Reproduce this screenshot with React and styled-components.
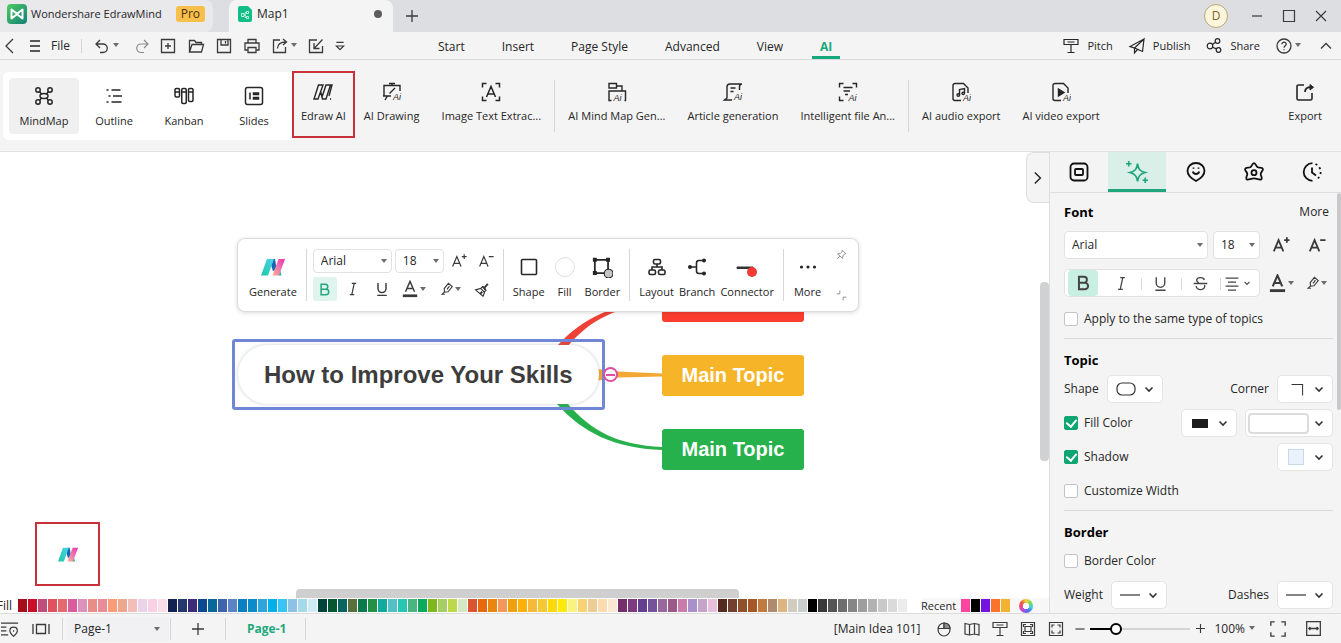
import { useState } from "react";
import styled, { createGlobalStyle, css } from "styled-components";

const palette = [
  "#a80f1d", "#c8102a", "#bf4f7a", "#e0525f", "#e46a70", "#d95c9c", "#dc93bb", "#e88d88", "#ea8c98", "#fb9c78",
  "#eda78f", "#f3bdb8", "#ead3e8", "#f9d0e5", "#fbdfe8", "#14224f", "#23396b", "#3c2c78", "#0b4a8f", "#0a6799",
  "#3f63ad", "#5b84c4", "#0a7fc2", "#0b8bca", "#2ea6dc", "#04b0ea", "#38c4f4", "#8dc1e6", "#a4d9ea", "#cfeaf5",
  "#03443a", "#075632", "#0a6560", "#59703b", "#0a7a4a", "#219243", "#10ab9d", "#54bfc6", "#26c6b2", "#4bb582",
  "#0cab5c", "#7fb81c", "#a5cf66", "#bdd849", "#d3e8c3", "#da5430", "#e8690d", "#e8860f", "#f3985a", "#eda20d",
  "#fbb00c", "#f8b93b", "#f4c934", "#fbd90a", "#fdea0a", "#faf283", "#fbd273", "#ebcd97", "#fcdcae", "#fbe8d2",
  "#75306c", "#7f3a7f", "#643f8f", "#74539a", "#96689c", "#9b5b8a", "#c97bac", "#a990cb", "#c6a3cb", "#e8bfda",
  "#552a20", "#73402f", "#8f502a", "#a5572a", "#bf7a3d", "#b08a6e", "#deb580", "#d0ccc0", "#c8d0c9", "#000000",
  "#393939", "#555555", "#6e6e6e", "#868686", "#9e9e9e", "#b2b2b2", "#c9c9c9", "#dadada", "#ececec", "#ffffff",
];

const recent = ["#fb459e", "#000000", "#7414e0", "#fb7328", "#f4b232"];

const menus = ["Start", "Insert", "Page Style", "Advanced", "View", "AI"];

const views = [
  { icon: "mindmap", label: "MindMap" },
  { icon: "outline", label: "Outline" },
  { icon: "kanban", label: "Kanban" },
  { icon: "slides", label: "Slides" },
];

function AiMark({ x, y }) {
  return (
    <text x={x} y={y} fontSize="9" fontStyle="italic" fill="currentColor" stroke="none" fontFamily="Liberation Sans, sans-serif">
      Ai
    </text>
  );
}

const shapes = {
  back: <path d="M13 3 6 10l7 7" />,
  menu: <path d="M5 5h10M5 10h10M5 15h10" />,
  undo: <path d="M8 4 4 8l4 4M4.5 8H11a4.2 4.2 0 0 1 0 8.5H8" />,
  redo: <path d="m12 4 4 4-4 4M15.5 8H9a4.2 4.2 0 0 0 0 8.5h3" />,
  add: <path d="M3.500 3.500h13v13h-13zM10 7v6M7 10h6" />,
  open: <path d="M3.500 16V4.500h5l1.500 2h5.500v2M3.500 16l2.500-7.500h11.500L15.500 16z" />,
  save: <path d="M3.500 3.500h13v13h-13zM7 3.500v5.500h7V3.500M11.500 5v2.500" />,
  print: <path d="M6 7V3.500h8V7M6 14H3V7h14v7h-3M6 11.500h8v5H6z" />,
  share: <path d="M10 4H3.500v12.500h12V11M7.500 12.500c0-4 2.500-6.500 8.500-6.500M13 3l3.500 3L13 9" />,
  import: <path d="M11 4H3.500v12.500h13V10M16.500 3.500 8.500 12M8 7v5.500h5.500" />,
  more: <path d="M6 6h8M6 10h8l-4 4z" />,
  pitch: <path d="M3 3.500h14v5H3zM6.500 6h7M10 8.500v8M6.500 16.500h7" />,
  publish: <path d="M17 3 3 10.500l4.500 1.500L17 3l-1.500 12.500-8-3.500v5l3-3.500" />,
  nodes: (
    <>
      <circle cx="6" cy="10" r="2.8" />
      <circle cx="13.5" cy="5" r="2.3" />
      <circle cx="14.5" cy="14" r="2.3" />
      <path d="m8.500 8.600 3-2.300M8.600 11.200l3.800 1.700" />
    </>
  ),
  help: (
    <>
      <circle cx="10" cy="10" r="7" />
      <path d="M7.800 8.300c0-3 4.600-2.800 4.400 0C12.100 9.800 10 9.800 10 11.700M10 13.200v1" />
    </>
  ),
  up: <path d="m5 12.500 5-5 5 5" />,
  right: <path d="m6 3 7 7-7 7" />,
  down: <path d="m6.500 8.500 3.500 3.500 3.500-3.500" />,
  minus: <path d="M5 10h10" />,
  plus: <path d="M4 10h12M10 4v12" />,
  square: <path d="M4.500 4.500h11v11h-11z" />,
  close: <path d="m5 5 10 10M15 5 5 15" />,
  mindmap: (
    <>
      <ellipse cx="10" cy="10" rx="4" ry="2.5" />
      <circle cx="4" cy="4" r="2.2" />
      <circle cx="16" cy="4" r="2.2" />
      <circle cx="4" cy="16" r="2.2" />
      <circle cx="16" cy="16" r="2.2" />
      <path d="m5.500 5.500 2 2.400M14.500 5.500l-2 2.400M5.500 14.500l2-2.400M14.500 14.500l-2-2.400" />
    </>
  ),
  outline: <path d="M2.500 4h2M7.500 4h9M4.500 10h2M9 10h9M2.500 16h2M7.500 16h10" />,
  kanban: (
    <>
      <rect x="1" y="2.5" width="4.5" height="8.5" rx="1.2" />
      <rect x="7.75" y="2.5" width="4.5" height="15" rx="1.2" />
      <rect x="14.5" y="2.5" width="4.5" height="13" rx="1.2" />
      <path d="M1 6h4.500M8 6h4M14.500 6H19" />
    </>
  ),
  slides: (
    <>
      <rect x="1.5" y="1.5" width="17" height="17" rx="2" />
      <path d="M6 6.500v7M9.500 7h5v1.500h-5zM9.500 11.500h5V13h-5z" />
    </>
  ),
  edraw: <path d="M5.500 3H10L5 17H1zM7.500 9 9.500 17H13L17.500 3H13L9 15M17.500 3H19l-3 11M17 17h1.200" />,
  drawing: (
    <>
      <path d="M7 1.500h6M10 1.500V3.500M18 9V3.500H2V14h7M5.500 14 3 18M1 14h8M7.500 11.500 13 6" />
      <AiMark x="11" y="18" />
    </>
  ),
  scanText: <path d="M1.500 5.500v-4h4M14.500 1.500h4v4M1.500 14.500v4h4M14.500 18.500h4v-4M5.500 15l4.500-10.500L14.500 15M7 12h6" />,
  aiMap: (
    <>
      <path d="M2 1.500h7.500V6H2zM9.500 4H15v4.500M4.500 18.500H2V9h16.500v9.500h-1" />
      <AiMark x="6.5" y="18.5" />
    </>
  ),
  article: (
    <>
      <path d="M9 18H1.500L4 16V5c0-2 1-3 3-3h12c-1.500 0-2.500 1-2.500 3v3M7.500 6h5M7.500 9.500h3" />
      <AiMark x="11" y="18" />
    </>
  ),
  fileAi: (
    <>
      <path d="M1.500 5.500v-4h4M14.500 1.500h4v4M1.500 14.500v4h4M5.500 5.500h9M5.500 9h6.500M7 12.500h3" />
      <AiMark x="10.5" y="19" />
    </>
  ),
  audio: (
    <>
      <path d="M10 18.500H4a2 2 0 0 1-2-2v-13a2 2 0 0 1 2-2h8.500L17 6v5M8.500 13V7.500l5-1V11" />
      <circle cx="7.3" cy="13" r="1.3" />
      <circle cx="12.2" cy="11.3" r="1.2" />
      <AiMark x="12" y="19" />
    </>
  ),
  video: (
    <>
      <path d="M10 18.500H4a2 2 0 0 1-2-2v-13a2 2 0 0 1 2-2h8.500L17 6v5" />
      <path d="m7.500 7 5.500 3.500L7.500 14z" fill="currentColor" />
      <AiMark x="12" y="19" />
    </>
  ),
  export: (
    <>
      <path d="M9 3H3.500A1.500 1.500 0 0 0 2 4.500v12A1.500 1.500 0 0 0 3.500 18h12a1.500 1.500 0 0 0 1.500-1.500V11" />
      <path d="M10 10c0-3 1.500-4.800 6-4.800" strokeWidth="1.8" />
      <path d="m15 2.500 3.500 2.800L15 8z" fill="currentColor" strokeWidth="1" />
    </>
  ),
  bold: <path d="M5.500 3h5.500a3.300 3.300 0 0 1 0 6.700H5.500zM5.500 9.700H12a3.600 3.600 0 0 1 0 7.300H5.500z" />,
  italic: <path d="M8.500 3H14M6 17h5.500M11.500 3 8.500 17" />,
  underline: <path d="M5 2.500v7a5 5 0 0 0 10 0v-7M4 18h12" />,
  strike: <path d="M14.500 6c-.5-4-9-4-9 .3 0 1.500 1 2.200 2.500 2.700M2 10h16M5 13c.3 5.500 10 5.500 10 .3 0-.6-.1-1-.4-1.500" />,
  align: <path d="M2 4h16M5 9h10M2 14h16M5 19h10" />,
  fontColor: (
    <>
      <path d="M5 13 10 1.500 15 13M6.500 9.500h7" />
      <path d="M2 17.500h16" strokeWidth="3" />
    </>
  ),
  bigger: <path d="M2 17 7.300 4.500 12.600 17M4 13h6.600M13.500 4.500h6M16.500 1.500v6" />,
  smaller: <path d="M2 17 7.300 4.500 12.600 17M4 13h6.600M13.500 4.500h6" />,
  marker: <path d="M6 9.500 12 2l5.500 4.500-6 7.500-5 .5zM6.500 14 3 17.500h4M13.500 6 10 10.500" />,
  painter: (
    <>
      <path d="m2 10.500 7-2 5 5.500-2 5zM9 8.500l2.500-2.500 4.500 5-2.500 2.500z" />
      <path d="m14 7.500 4.500-5M11.500 6l4 4.500M8 16l3-3" strokeWidth="2.5" />
    </>
  ),
  box: <rect x="2.5" y="2.5" width="15" height="15" rx="1" />,
  border: (
    <>
      <path d="M3.500 3.500h12v12h-12z" />
      <path d="M2.500 2.500h2v2h-2zM14.500 2.500h2v2h-2zM2.500 14.500h2v2h-2z" fill="currentColor" />
      <circle cx="16" cy="16" r="4" fill="#c4c4c4" strokeWidth="1" />
    </>
  ),
  layout: (
    <>
      <rect x="6.5" y="2.5" width="7" height="4.5" rx="1.5" />
      <rect x="2" y="13" width="6.5" height="4.5" rx="1.5" />
      <rect x="11.5" y="13" width="6.5" height="4.5" rx="1.5" />
      <path d="M10 7v3M5 13v-3h10v3" />
    </>
  ),
  branch: (
    <>
      <path d="M3 10h6M16.500 3.500H12A2.500 2.500 0 0 0 9.500 6v8a2.500 2.500 0 0 0 2.500 2.500h4.500" />
      <circle cx="3" cy="10" r="1.2" fill="currentColor" />
      <circle cx="17" cy="3.5" r="1.2" fill="currentColor" />
      <circle cx="17" cy="16.5" r="1.2" fill="currentColor" />
    </>
  ),
  dots: (
    <g fill="currentColor" stroke="none">
      <circle cx="3.5" cy="10" r="1.6" />
      <circle cx="10" cy="10" r="1.6" />
      <circle cx="16.5" cy="10" r="1.6" />
    </g>
  ),
  pin: <path d="m11.500 2 6.500 6.500-2.500.5-3 3.500-.5 4.500L3 9l4.500-.5L11 5zM7 13l-4.500 4.500" />,
  collapse: <path d="M7 1v6H1M13 19v-6h6" />,
  tabStyle: (
    <>
      <rect x="1.5" y="1.5" width="17" height="17" rx="3.5" />
      <rect x="6" y="7" width="8" height="6" rx="1" />
    </>
  ),
  tabAi: <path d="M10.500 2.500c.8 5 2.200 6.700 7 8-4.800 1.300-6.200 3-7 8-.8-5-2.200-6.700-7-8 4.800-1.300 6.200-3 7-8zM2.500 0v5M0 2.500h5M17.500 15v5M15 17.500h5" />,
  tabIcon: (
    <>
      <path d="M10 19C4.500 16 1.500 12.500 1.500 8.700a8.500 7.700 0 0 1 17 0c0 3.800-3 7.300-8.500 10.300z" />
      <path d="M6.800 9.500c.8 3.300 5.600 3.300 6.400 0M7.500 5.500v1.200M12.500 5.500v1.200" />
    </>
  ),
  tabClip: (
    <>
      <path d="M10 1.200c1.800 0 2.200 3.200 3.700 4.100 1.400.8 4.700-.1 5.200 1.600.5 1.700-2.200 3.300-2.200 5 0 1.800 1.900 4.100.6 5.400-1.300 1.200-4.100-.9-7.300-.9s-6 2.100-7.300.9c-1.300-1.300.6-3.600.6-5.400 0-1.700-2.700-3.300-2.200-5 .5-1.700 3.800-.8 5.200-1.600 1.500-.9 1.900-4.100 3.700-4.100z" />
      <circle cx="10" cy="10.7" r="2.5" />
    </>
  ),
  tabHistory: (
    <>
      <path d="M10.500 1.200a8.800 8.800 0 1 0 0 17.600M10 5.500v5l4 3" />
      <path d="M13.500 2a8.800 8.800 0 0 1 0 16" strokeDasharray="2 3" />
    </>
  ),
  listPin: <path d="M0 3.500h19M0 8h6M0 12h6M0 16.500h8M14 18c-6.500-5-4.500-10 0-10s6.500 5 0 10zM14 11.500v1.500" />,
  panels: <path d="M2 5v10M18 5v10M5.500 5.500h9v9h-9z" />,
  mouse: (
    <>
      <ellipse cx="10" cy="10.5" rx="6" ry="6.5" />
      <path d="M4 9.500h12M10 4v5.500" />
      <path d="M10 4c4 0 6 2.500 6 5.500h-6z" fill="#8b8b8b" />
    </>
  ),
  map: <path d="m3 4.500 4.500 1 5-1 4.500 1v10.500l-4.500-1-5 1-4.500-1zM7.500 5.500V16M12.500 4.500V15" />,
  fit: <path d="M3.500 3.500h13v13h-13zM7 7.500h6v5H7zM5.500 8V5.500H8M12 5.500h2.500V8M5.500 12v2.500H8M12 14.500h2.500V12" />,
  fill: <path d="M3.500 3.500h13v13h-13zM6 8.500V6h2.500M11.500 6H14v2.500M6 11.500V14h2.500M11.500 14H14v-2.500" />,
  full: <path d="M3.500 7V3.500H7M13 3.500h3.500V7M3.500 13v3.500H7M13 16.500h3.500V13" />,
  fitWidth: <path d="M3.500 3.500h13v13h-13zM5.500 10h9M7 8.500 5.500 10 7 11.500M13 8.500l1.500 1.500-1.500 1.500" />,
  rounded: <rect x="1" y="4" width="18" height="12" rx="5" />,
  corner: <path d="M3 4h13v13" />,
  line: <path d="M-2 10h24" />,
};

function Icon({ name, size = 20, weight = 1 }) {
  return (
    <Svg width={size} height={size} viewBox="0 0 20 20" strokeWidth={weight} aria-hidden="true">
      {shapes[name]}
    </Svg>
  );
}

function Caret() {
  return (
    <Svg width="8" height="5" viewBox="0 0 8 5" aria-hidden="true">
      <path d="M1 0h6L4 4z" fill="#6b6b6b" stroke="none" />
    </Svg>
  );
}

function Logo({ width }) {
  return (
    <Svg width={width} viewBox="0 0 24 18" stroke="none" aria-hidden="true">
      <defs>
        <linearGradient id="teal" x1="1" y1="0" x2="0" y2="1">
          <stop offset="0" stopColor="#4bd3ee" />
          <stop offset="1" stopColor="#1cc9a4" />
        </linearGradient>
        <linearGradient id="pink" x1="1" y1="0" x2="0" y2="1">
          <stop offset="0" stopColor="#f02fa6" />
          <stop offset="0.5" stopColor="#ee74b4" />
          <stop offset="1" stopColor="#fbb08a" />
        </linearGradient>
      </defs>
      <path d="M11.500 1h2.500l1.500 9-3.500 3.500-2-7z" fill="#1766b0" />
      <path d="m17 17.500 2-6 1.500 6z" fill="#23b6a0" />
      <path d="M6 1h7L7 17.500H0z" fill="url(#teal)" />
      <path d="M17.500 1H24l-6 16.500h-6.500z" fill="url(#pink)" />
    </Svg>
  );
}

function Dropdown({ label, icon, width, iconSize = 20, children }) {
  return (
    <DropButton type="button" aria-label={label} $width={width}>
      {children || <Icon name={icon} size={iconSize} weight={1.2} />}
      <Icon name="down" weight={1.6} />
    </DropButton>
  );
}

function Select({ label, options, width, tall }) {
  return (
    <SelectBox $width={width}>
      <NativeSelect aria-label={label} $tall={tall}>
        {options.map((option) => (
          <option key={option}>{option}</option>
        ))}
      </NativeSelect>
      <Caret />
    </SelectBox>
  );
}

function Check({ label, checked }) {
  return (
    <CheckLabel>
      <CheckInput type="checkbox" defaultChecked={checked} />
      {label}
    </CheckLabel>
  );
}

function Header() {
  return (
    <>
      <TitleBar>
        <AppTab>
          <AppLogo width="20" height="20" viewBox="0 0 20 20" aria-hidden="true">
            <defs>
              <linearGradient id="app" x1="0" y1="0" x2="1" y2="1">
                <stop offset="0" stopColor="#4ecb62" />
                <stop offset="1" stopColor="#127f78" />
              </linearGradient>
            </defs>
            <rect width="20" height="20" rx="4" fill="url(#app)" />
            <path d="M4.500 14.500V5.500L10 9.800l5.500-4.300v9L10 10.200z" fill="none" stroke="#fff" strokeWidth="2" strokeLinejoin="round" />
          </AppLogo>
          Wondershare EdrawMind
          <Pro>Pro</Pro>
        </AppTab>
        <DocTab>
          <AppLogo width="14" height="16" viewBox="0 0 14 16" aria-hidden="true">
            <path d="M2 0h8l4 4v10a2 2 0 0 1-2 2H2a2 2 0 0 1-2-2V2a2 2 0 0 1 2-2z" fill="#12bd88" />
            <path d="M3.500 7.500h2.500v3H3.500zM8.500 5.500h2v2h-2zM8.500 10.500h2v2h-2zM6 9h1.200M8.500 6.500H7.200v5h1.300" fill="none" stroke="#e6fff5" strokeWidth="0.8" />
          </AppLogo>
          Map1
          <Dot />
        </DocTab>
        <IconButton type="button" aria-label="New tab" $width={38}>
          <Icon name="plus" weight={1.3} />
        </IconButton>
        <Spacer />
        <Avatar>D</Avatar>
        <IconButton type="button" aria-label="Minimize" $width={32}><Icon name="minus" weight={1.2} /></IconButton>
        <IconButton type="button" aria-label="Maximize" $width={32}><Icon name="square" weight={1.2} /></IconButton>
        <IconButton type="button" aria-label="Close" $width={32}><Icon name="close" weight={1.2} /></IconButton>
      </TitleBar>
      <MenuBar>
        <IconButton type="button" aria-label="Back" $width={20}><Icon name="back" weight={1.3} /></IconButton>
        <FileButton type="button"><Icon name="menu" weight={1.3} />File</FileButton>
        <Rule $height={14} />
        <IconButton type="button" aria-label="Undo" $width={48}><Icon name="undo" weight={1.3} /><Caret /></IconButton>
        <IconButton type="button" aria-label="Redo" $width={24} $dim><Icon name="redo" weight={1.2} /></IconButton>
        <IconButton type="button" aria-label="New" $width={28}><Icon name="add" weight={1.3} /></IconButton>
        <IconButton type="button" aria-label="Open" $width={28}><Icon name="open" weight={1.3} /></IconButton>
        <IconButton type="button" aria-label="Save" $width={28}><Icon name="save" weight={1.3} /></IconButton>
        <IconButton type="button" aria-label="Print" $width={28}><Icon name="print" weight={1.3} /></IconButton>
        <IconButton type="button" aria-label="Share file" $width={36}><Icon name="share" weight={1.3} /><Caret /></IconButton>
        <IconButton type="button" aria-label="Import" $width={28}><Icon name="import" weight={1.3} /></IconButton>
        <IconButton type="button" aria-label="More commands" $width={20}><Icon name="more" size={18} weight={1.3} /></IconButton>
        <Menus>
          {menus.map((menu) => (
            <MenuLink key={menu} href="#" $active={menu === "AI"}>{menu}</MenuLink>
          ))}
        </Menus>
        <Actions>
          <TextButton type="button"><Icon name="pitch" weight={1.2} />Pitch</TextButton>
          <TextButton type="button"><Icon name="publish" weight={1.2} />Publish</TextButton>
          <TextButton type="button"><Icon name="nodes" weight={1.2} />Share</TextButton>
          <IconButton type="button" aria-label="Help" $width={28}><Icon name="help" weight={1.3} /><Caret /></IconButton>
          <IconButton type="button" aria-label="Collapse ribbon" $width={20}><Icon name="up" weight={1.3} /></IconButton>
        </Actions>
      </MenuBar>
      <Ribbon>
        <ViewCard>
          {views.map((view, i) => (
            <ViewButton key={view.label} type="button" $active={i === 0}>
              <Icon name={view.icon} weight={1.5} />
              {view.label}
            </ViewButton>
          ))}
        </ViewCard>
        <RibbonButton type="button" $marked><Icon name="edraw" weight={1.4} />Edraw AI</RibbonButton>
        <RibbonButton type="button"><Icon name="drawing" weight={1.4} />AI Drawing</RibbonButton>
        <RibbonButton type="button" $wide><Icon name="scanText" weight={1.5} />Image Text Extrac...</RibbonButton>
        <Rule $height={52} />
        <RibbonButton type="button" $inset><Icon name="aiMap" weight={1.4} />AI Mind Map Gen...</RibbonButton>
        <RibbonButton type="button"><Icon name="article" weight={1.4} />Article generation</RibbonButton>
        <RibbonButton type="button" $inset><Icon name="fileAi" weight={1.4} />Intelligent file An...</RibbonButton>
        <Rule $height={52} />
        <RibbonButton type="button" $inset><Icon name="audio" weight={1.4} />AI audio export</RibbonButton>
        <RibbonButton type="button"><Icon name="video" weight={1.4} />AI video export</RibbonButton>
        <Spacer />
        <RibbonButton type="button"><Icon name="export" weight={1.6} />Export</RibbonButton>
      </Ribbon>
    </>
  );
}

function FloatingToolbar() {
  return (
    <Floating>
      <Tool type="button"><Logo width={24} />Generate</Tool>
      <Rule $height={52} />
      <FontTools>
        <ToolRow>
          <Select label="Font family" options={["Arial"]} width={79} />
          <Select label="Font size" options={["18"]} width={49} />
          <IconButton type="button" aria-label="Larger text" $width={24}><Icon name="bigger" size={16} weight={1.5} /></IconButton>
          <IconButton type="button" aria-label="Smaller text" $width={24}><Icon name="smaller" size={16} weight={1.5} /></IconButton>
        </ToolRow>
        <ToolRow $tight>
          <Toggle type="button" aria-label="Bold" $active><Icon name="bold" size={15} weight={2} /></Toggle>
          <IconButton type="button" aria-label="Italic" $width={32}><Icon name="italic" size={16} weight={1.5} /></IconButton>
          <IconButton type="button" aria-label="Underline" $width={26}><Icon name="underline" size={16} weight={1.8} /></IconButton>
          <IconButton type="button" aria-label="Font color" $width={38}><Icon name="fontColor" size={18} weight={1.6} /><Caret /></IconButton>
          <IconButton type="button" aria-label="Highlight" $width={36}><Icon name="marker" size={14} weight={1.6} /><Caret /></IconButton>
          <IconButton type="button" aria-label="Format painter" $width={26}><Icon name="painter" size={15} weight={1.5} /></IconButton>
        </ToolRow>
      </FontTools>
      <Rule $height={52} />
      <ToolGroup>
        <Tool type="button"><Icon name="box" weight={1.6} />Shape</Tool>
        <Tool type="button"><FillDot />Fill</Tool>
        <Tool type="button"><Icon name="border" size={22} weight={1.6} />Border</Tool>
      </ToolGroup>
      <Rule $height={52} />
      <ToolGroup $tight>
        <Tool type="button"><Icon name="layout" weight={1.6} />Layout</Tool>
        <Tool type="button"><Icon name="branch" weight={1.6} />Branch</Tool>
        <Tool type="button">
          <Svg width="22" height="20" viewBox="0 0 22 20" aria-hidden="true">
            <path d="M1 10h16v1.500H1z" fill="#333" stroke="#333" />
            <circle cx="16" cy="15" r="5" fill="#f03a32" stroke="none" />
          </Svg>
          Connector
        </Tool>
      </ToolGroup>
      <Rule $height={52} />
      <Tool type="button"><Icon name="dots" />More</Tool>
      <Corner>
        <CornerButton type="button" aria-label="Pin toolbar"><Icon name="pin" size={11} weight={1.6} /></CornerButton>
        <CornerButton type="button" aria-label="Shrink toolbar"><Icon name="collapse" size={11} weight={1.6} /></CornerButton>
      </Corner>
    </Floating>
  );
}

function Canvas() {
  return (
    <Board>
      <Links width="430" height="170" viewBox="233 281 430 170" aria-hidden="true">
        <path d="M557 346c26-28 56-43 105-46v3c-46 3-72 17-94 43z" fill="#ef4136" />
        <path d="M598 369l20 2.500 44 2v3l-44 1-20 3z" fill="#f3a833" />
        <path d="M557 404c26 29 57 44 105 46v-3c-44-2-71-16-94-43z" fill="#27b04b" />
      </Links>
      <Topic $top={129} $color="#fb3d2f">Main Topic</Topic>
      <Topic $top={203} $color="#f6b428">Main Topic</Topic>
      <Topic $top={277} $color="#26b14c">Main Topic</Topic>
      <Selection>
        <MainIdea>How to Improve Your Skills</MainIdea>
      </Selection>
      <Fold type="button" aria-label="Collapse branch" />
      <FloatingToolbar />
      <Assistant type="button" aria-label="Edraw AI assistant"><Logo width={20} /></Assistant>
      <PanelToggle type="button" aria-label="Hide panel"><Icon name="right" size={16} weight={1.8} /></PanelToggle>
      <VerticalBar />
      <HorizontalBar />
    </Board>
  );
}

function Palette() {
  return (
    <PaletteBar>
      <FillLabel>Fill</FillLabel>
      {palette.map((color) => (
        <Swatch key={color} type="button" aria-label={color} $color={color} />
      ))}
      <RecentLabel>Recent</RecentLabel>
      {recent.map((color) => (
        <Swatch key={color} type="button" aria-label={color} $color={color} />
      ))}
      <Wheel type="button" aria-label="More colors" />
    </PaletteBar>
  );
}

function Sidebar() {
  return (
    <Panel>
      <PanelTabs>
        {["tabStyle", "tabAi", "tabIcon", "tabClip", "tabHistory"].map((name) => (
          <PanelTab key={name} type="button" aria-label={name} $active={name === "tabAi"}>
            <Icon name={name} size={name === "tabAi" ? 22 : 20} weight={name === "tabAi" ? 1.5 : 1.8} />
          </PanelTab>
        ))}
      </PanelTabs>
      <PanelBody>
        <Section $gap={4}>
          <Heading>Font<MoreLink href="#">More</MoreLink></Heading>
          <Row $gap={5}>
            <Select label="Topic font" options={["Arial"]} width={144} tall />
            <Select label="Topic font size" options={["18"]} width={47} tall />
            <PanelIcons>
              <IconButton type="button" aria-label="Larger topic text" $width={32}><Icon name="bigger" size={18} weight={2} /></IconButton>
              <IconButton type="button" aria-label="Smaller topic text" $width={32}><Icon name="smaller" size={18} weight={2} /></IconButton>
            </PanelIcons>
          </Row>
          <Row $gap={5}>
            <Segments>
              <Segment type="button" aria-label="Bold topic" $active><Icon name="bold" size={18} weight={2.2} /></Segment>
              <Segment type="button" aria-label="Italic topic"><Icon name="italic" size={17} weight={1.5} /></Segment>
              <Segment type="button" aria-label="Underline topic"><Icon name="underline" size={17} weight={1.6} /></Segment>
              <Segment type="button" aria-label="Strikethrough"><Icon name="strike" size={17} weight={1.6} /></Segment>
              <Segment type="button" aria-label="Align"><Icon name="align" size={16} weight={1.6} /><Icon name="down" size={14} weight={1.6} /></Segment>
            </Segments>
            <PanelIcons>
              <IconButton type="button" aria-label="Topic font color" $width={32}><Icon name="fontColor" size={19} weight={2.2} /><Caret /></IconButton>
              <IconButton type="button" aria-label="Topic highlight" $width={32}><Icon name="marker" size={14} weight={1.6} /><Caret /></IconButton>
            </PanelIcons>
          </Row>
          <Row $short><Check label="Apply to the same type of topics" /></Row>
        </Section>
        <Section>
          <Heading>Topic</Heading>
          <Row>
            Shape
            <Dropdown label="Shape" icon="rounded" width={56} />
            <Spacer />
            Corner
            <Dropdown label="Corner" icon="corner" width={56} iconSize={17} />
          </Row>
          <Row>
            <Check label="Fill Color" checked />
            <Spacer />
            <Dropdown label="Fill style" width={56}><Chip $color="#1c1c1e" /></Dropdown>
            <Dropdown label="Fill color" width={88}><WideChip /></Dropdown>
          </Row>
          <Row>
            <Check label="Shadow" checked />
            <Spacer />
            <Dropdown label="Shadow color" width={56}><Chip $color="#eaf3fd" $square /></Dropdown>
          </Row>
          <Row><Check label="Customize Width" /></Row>
        </Section>
        <Section>
          <Heading>Border</Heading>
          <Row><Check label="Border Color" /></Row>
          <Row>
            Weight
            <Dropdown label="Weight" icon="line" width={56} />
            <Spacer />
            Dashes
            <Dropdown label="Dashes" icon="line" width={56} />
          </Row>
        </Section>
        <PanelScroll />
      </PanelBody>
    </Panel>
  );
}

function StatusBar() {
  const [zoom, setZoom] = useState(22);

  return (
    <Status>
      <IconButton type="button" aria-label="Outline pane" $width={20}><Icon name="listPin" size={18} weight={1.3} /></IconButton>
      <IconButton type="button" aria-label="Page layout" $width={42}><Icon name="panels" weight={1.3} /></IconButton>
      <Rule $height={22} />
      <PageBox><Select label="Page" options={["Page-1"]} width={102} /></PageBox>
      <Rule $height={22} />
      <IconButton type="button" aria-label="Add page" $width={54}><Icon name="plus" weight={1.3} /></IconButton>
      <Rule $height={22} />
      <PageLink href="#">Page-1</PageLink>
      <Rule $height={22} />
      <Spacer />
      <span>[Main Idea 101]</span>
      <StatusIcons>
        {["mouse", "map", "pitch", "fit", "fill"].map((name) => (
          <IconButton key={name} type="button" aria-label={name} $width={28}><Icon name={name} weight={1.2} /></IconButton>
        ))}
      </StatusIcons>
      <IconButton type="button" aria-label="Zoom out" $width={20}><Icon name="minus" size={18} weight={1.3} /></IconButton>
      <Slider
        type="range"
        aria-label="Zoom"
        value={zoom}
        onChange={(e) => setZoom(Number(e.target.value))}
        style={{ "--fill": `${zoom}%` }}
      />
      <IconButton type="button" aria-label="Zoom in" $width={20}><Icon name="plus" size={15} weight={1.5} /></IconButton>
      <ZoomButton type="button">100%<Caret /></ZoomButton>
      <IconButton type="button" aria-label="Full screen" $width={36}><Icon name="full" size={22} weight={1.2} /></IconButton>
      <IconButton type="button" aria-label="Fit width" $width={34}><Icon name="fitWidth" size={21} weight={1.2} /></IconButton>
    </Status>
  );
}

export default function App() {
  return (
    <Shell>
      <GlobalStyle />
      <Header />
      <Main>
        <Workspace>
          <Canvas />
          <Palette />
        </Workspace>
        <Sidebar />
      </Main>
      <StatusBar />
    </Shell>
  );
}

const GlobalStyle = createGlobalStyle`
  * {
    box-sizing: border-box;
  }

  body {
    margin: 0;
    color: #262626;
    font: 12px/16px "Open Sans", "Noto Sans", sans-serif;
  }

  button, select, input {
    margin: 0;
    padding: 0;
    border: 0;
    background: none;
    color: inherit;
    font: inherit;
  }

  a {
    color: inherit;
    text-decoration: none;
  }
`;

const Shell = styled.div`
  display: flex;
  flex-direction: column;
  height: 100vh;
  overflow: hidden;
  background: #f4f4f4;
  white-space: nowrap;
`;

const Svg = styled.svg`
  flex: none;
  fill: none;
  stroke: ${(p) => p.stroke || "currentColor"};
`;

const AppLogo = styled.svg`
  flex: none;
`;

const Spacer = styled.div`
  flex: 1;
`;

const Rule = styled.div`
  flex: none;
  width: 1px;
  height: ${(p) => p.$height}px;
  background: #d6d6d6;
`;

const IconButton = styled.button`
  display: flex;
  flex: none;
  align-items: center;
  justify-content: center;
  width: ${(p) => p.$width}px;
  color: ${(p) => (p.$dim ? "#8a8a8a" : "#3a3a3a")};
`;

const TitleBar = styled.header`
  display: flex;
  flex: none;
  align-items: center;
  height: 32px;
  padding-right: 4px;
  background: #dddee1;
`;

const AppTab = styled.div`
  display: flex;
  align-items: center;
  gap: 4px;
  height: 100%;
  margin-right: 16px;
  padding: 0 8px 4px 7px;
  border-radius: 0 8px 8px 0;
  background: #e9e9ec;
  font-size: 11px;
`;

const Pro = styled.span`
  margin-left: 10px;
  padding: 0 5px;
  border-radius: 3px;
  background: #f8bf4a;
  color: #4a3210;
  font-size: 12px;
`;

const DocTab = styled.div`
  display: flex;
  align-items: center;
  gap: 5px;
  width: 164px;
  height: 100%;
  padding: 0 11px 4px 9px;
  border-radius: 8px 8px 0 0;
  background: #f4f4f4;
`;

const Dot = styled.span`
  width: 8px;
  height: 8px;
  margin-left: auto;
  border-radius: 50%;
  background: #5c5c5c;
`;

const Avatar = styled.span`
  width: 24px;
  margin-right: 13px;
  border: 1px solid #b3a77c;
  border-radius: 50%;
  background: #fdf6dc;
  color: #7d6527;
  line-height: 22px;
  text-align: center;
`;

const MenuBar = styled.nav`
  display: flex;
  flex: none;
  align-items: center;
  height: 28px;
  border-bottom: 1px solid #dadbdc;
`;

const FileButton = styled.button`
  display: flex;
  align-items: center;
  gap: 6px;
  margin-right: 11px;
  padding-left: 5px;
`;

const Menus = styled.div`
  display: flex;
  gap: 37px;
  height: 100%;
  margin-left: 88px;
`;

const MenuLink = styled.a`
  position: relative;
  line-height: 29px;

  ${(p) =>
    p.$active &&
    css`
      color: #14a87c;
      font-weight: 700;

      &::after {
        position: absolute;
        right: -8px;
        bottom: 0;
        left: -8px;
        height: 3px;
        background: #14a87c;
        content: "";
      }
    `}
`;

const Actions = styled.div`
  display: flex;
  align-items: center;
  gap: 14px;
  margin-left: auto;
  padding-right: 5px;
  font-size: 11px;
`;

const TextButton = styled.button`
  display: flex;
  align-items: center;
  gap: 6px;
`;

const Ribbon = styled.div`
  display: flex;
  flex: none;
  align-items: center;
  height: 92px;
  padding: 0 10px 0 3px;
  border-bottom: 1px solid #e2e2e2;
  font-size: 11px;
`;

const ViewCard = styled.div`
  display: flex;
  padding: 6px 3px 6px 6px;
  border-radius: 6px 0 0 6px;
  background: #fff;
`;

const ViewButton = styled.button`
  display: flex;
  flex-direction: column;
  align-items: center;
  gap: 7px;
  width: 70px;
  padding: 8px 0 5px;
  border-radius: 4px;
  background: ${(p) => (p.$active ? "#f0f0f0" : "transparent")};
`;

const RibbonButton = styled.button`
  display: flex;
  flex-direction: column;
  align-items: center;
  gap: 6px;
  min-width: ${(p) => (p.$wide ? 126 : 0)}px;
  height: 67px;
  margin: 0 ${(p) => (p.$inset ? 4 : 0)}px 2px;
  padding: 11px 9px;

  ${(p) =>
    p.$marked &&
    css`
      padding: 9px 7px;
      border: 2px solid #c8313a;
    `}
`;

const Main = styled.main`
  display: flex;
  flex: 1;
  min-height: 0;
`;

const Workspace = styled.section`
  display: flex;
  flex: 1;
  flex-direction: column;
  min-width: 0;
`;

const Board = styled.div`
  position: relative;
  flex: 1;
  overflow: hidden;
  background: #fff;
`;

const Links = styled.svg`
  position: absolute;
  top: 129px;
  left: 233px;
`;

const Topic = styled.div`
  position: absolute;
  top: ${(p) => p.$top}px;
  left: 662px;
  width: 142px;
  border-radius: 3px;
  background: ${(p) => p.$color};
  color: #fff;
  font: bold 20px/41px "Liberation Sans", Arial, sans-serif;
  text-align: center;
`;

const Selection = styled.div`
  position: absolute;
  top: 187px;
  left: 232px;
  padding: 3px;
  border: 3px solid #6f87d6;
  border-radius: 3px;
`;

const MainIdea = styled.div`
  padding: 0 26px;
  border-radius: 30px;
  background: #fff;
  box-shadow: 0 0 3px 1px rgba(120, 130, 150, 0.25);
  color: #3d3d3d;
  font: bold 24px/59px "Liberation Sans", Arial, sans-serif;
`;

const Fold = styled.button`
  position: absolute;
  top: 215px;
  left: 603px;
  display: grid;
  place-content: center;
  width: 15px;
  height: 15px;
  border: 2px solid #dd4f9e;
  border-radius: 50%;
  background: #fff;

  &::before {
    width: 9px;
    height: 2px;
    background: #dd4f9e;
    content: "";
  }
`;

const Floating = styled.div`
  position: absolute;
  top: 86px;
  left: 237px;
  display: flex;
  align-items: center;
  padding: 10px 0 10px 11px;
  border: 1px solid #dcdcdc;
  border-radius: 8px;
  background: #fff;
  box-shadow: 0 1px 4px rgba(0, 0, 0, 0.15);
`;

const ToolGroup = styled.div`
  display: flex;
  gap: ${(p) => (p.$tight ? 5 : 10)}px;
  padding: 0 9px;
`;

const Tool = styled.button`
  display: grid;
  grid-template-rows: 24px 16px;
  gap: 5px;
  place-items: center;
  padding-top: 5px;
  font-size: 11px;

  ${Floating} > & {
    margin-right: 9px;
  }

  ${Floating} > div + & {
    margin: 0 0 0 10px;
  }
`;

const FillDot = styled.span`
  width: 20px;
  height: 20px;
  border: 1px solid #dedede;
  border-radius: 50%;
`;

const FontTools = styled.div`
  display: flex;
  flex-direction: column;
  gap: 4px;
  padding: 0 5px 0 6px;
`;

const ToolRow = styled.div`
  display: flex;
  align-items: center;
  gap: ${(p) => (p.$tight ? 0 : 3)}px;
`;

const Toggle = styled.button`
  display: grid;
  place-content: center;
  width: 24px;
  height: 24px;
  border-radius: 3px;
  background: #dff4ec;
  color: #25a67f;
`;

const Corner = styled.div`
  display: flex;
  flex-direction: column;
  justify-content: space-between;
  height: 52px;
  padding: 0 11px 0 15px;
`;

const CornerButton = styled.button`
  display: flex;
  color: #858585;
`;

const SelectBox = styled.div`
  position: relative;
  width: ${(p) => p.$width}px;

  > svg {
    position: absolute;
    top: 50%;
    right: 4px;
    margin-top: -2px;
    pointer-events: none;
  }
`;

const NativeSelect = styled.select`
  display: block;
  width: 100%;
  height: ${(p) => (p.$tall ? 28 : 24)}px;
  padding-left: 7px;
  border: 1px solid #e2e2e2;
  border-radius: 4px;
  background: #fff;
  appearance: none;
`;

const Assistant = styled.button`
  position: absolute;
  bottom: 12px;
  left: 35px;
  display: grid;
  place-content: center;
  width: 65px;
  height: 64px;
  border: 2px solid #c8313a;
`;

const PanelToggle = styled.button`
  position: absolute;
  top: 0;
  right: 0;
  display: grid;
  place-content: center;
  width: 23px;
  height: 51px;
  border: 1px solid #dedede;
  border-right: 0;
  border-radius: 8px 0 0 8px;
  background: #f4f4f4;
`;

const VerticalBar = styled.div`
  position: absolute;
  top: 130px;
  right: 0;
  width: 9px;
  height: 179px;
  border-radius: 4px;
  background: #d0d1d3;
`;

const HorizontalBar = styled.div`
  position: absolute;
  bottom: 0;
  left: 296px;
  width: 443px;
  height: 9px;
  border-radius: 4px 4px 0 0;
  background: #cfcfcf;
`;

const PaletteBar = styled.div`
  display: flex;
  flex: none;
  align-items: center;
  height: 15px;
  background: linear-gradient(90deg, #fff 88%, #f7f7f7 88%);
`;

const FillLabel = styled.span`
  display: flex;
  justify-content: flex-end;
  width: 12px;
  margin-right: 6px;
`;

const Swatch = styled.button`
  flex: none;
  width: 9px;
  height: 13px;
  margin-right: 1px;
  background: ${(p) => p.$color};
`;

const RecentLabel = styled.span`
  margin: 0 auto 0 3px;
  font-size: 11px;
`;

const Wheel = styled.button`
  width: 14px;
  height: 14px;
  margin: 0 16px 0 8px;
  border-radius: 50%;
  background:
    radial-gradient(#fff 32%, transparent 36%),
    conic-gradient(#f2d53c, #7ddc4e, #3fd0e0, #4a70ee, #b04be8, #ee4a8a, #f05a3a, #f2d53c);
`;

const Panel = styled.aside`
  display: flex;
  flex: none;
  flex-direction: column;
  width: 292px;
  border-left: 1px solid #dedede;
`;

const PanelTabs = styled.div`
  display: flex;
  flex: none;
  height: 41px;
  border-bottom: 1px solid #dedede;
`;

const PanelTab = styled.button`
  display: grid;
  flex: 1;
  place-content: center;
  padding-top: 2px;
  border-bottom: 3px solid ${(p) => (p.$active ? "#20a67c" : "transparent")};
  background: ${(p) => (p.$active ? "#d9efe8" : "none")};
  color: ${(p) => (p.$active ? "#20a67c" : "#111")};
`;

const PanelBody = styled.div`
  position: relative;
  flex: 1;
  padding: 0 8px 0 14px;
  overflow: hidden;
`;

const Section = styled.section`
  display: flex;
  flex-direction: column;
  gap: ${(p) => p.$gap || 0}px;
  padding: 9px 0 2px;

  &:first-child {
    padding: 7px 0 4px;
  }

  & + & {
    border-top: 1px solid #d9d9d9;
  }
`;

const Heading = styled.h2`
  display: flex;
  justify-content: space-between;
  margin: 0;
  padding-right: 4px;
  color: #000;
  font-size: 13px;
  line-height: 24px;
`;

const MoreLink = styled.a`
  color: #262626;
  font-size: 12px;
  font-weight: 400;
`;

const Row = styled.div`
  display: flex;
  align-items: center;
  gap: ${(p) => p.$gap || 8}px;
  height: ${(p) => (p.$short ? 30 : 34)}px;
`;

const PanelIcons = styled.div`
  display: flex;
  flex: 1;
  justify-content: space-between;
`;

const Segments = styled.div`
  display: flex;
  width: 196px;
  height: 28px;
  border: 1px solid #e2e2e2;
  border-radius: 5px;
  background: #fff;
`;

const Segment = styled.button`
  position: relative;
  display: flex;
  flex: 1;
  align-items: center;
  justify-content: center;
  color: #444;

  & + &::before {
    position: absolute;
    top: 8px;
    left: 0;
    width: 1px;
    height: 12px;
    background: #d9d9d9;
    content: "";
  }

  ${(p) =>
    p.$active &&
    css`
      flex: none;
      width: 30px;
      margin: 0 4px 0 3px;
      border-radius: 4px;
      background: #c9efe2;
    `}
`;

const DropButton = styled.button`
  display: flex;
  flex: none;
  align-items: center;
  justify-content: flex-end;
  gap: 3px;
  width: ${(p) => p.$width}px;
  height: 28px;
  padding-right: 3px;
  border: 1px solid #e4e4e4;
  border-radius: 5px;
  background: #fff;
  color: #333;
`;

const Chip = styled.span`
  width: 16px;
  height: ${(p) => (p.$square ? 16 : 9)}px;
  margin-right: 2px;
  border: 1px solid ${(p) => (p.$square ? "#c9d9e8" : p.$color)};
  background: ${(p) => p.$color};
`;

const WideChip = styled.span`
  width: 61px;
  height: 21px;
  margin-right: -3px;
  border: 2px solid #dcdcdc;
  border-radius: 4px;
`;

const CheckLabel = styled.label`
  display: flex;
  align-items: center;
  gap: 6px;
`;

const CheckInput = styled.input`
  display: grid;
  place-content: center;
  width: 14px;
  height: 14px;
  border: 1px solid #c4c4c4;
  border-radius: 2px;
  background: #fff;
  appearance: none;

  &:checked {
    border-color: #0fa573;
    background: #0fa573;
  }

  &:checked::before {
    width: 5px;
    height: 8px;
    border: solid #fff;
    border-width: 0 2px 2px 0;
    transform: translateY(-1px) rotate(40deg);
    content: "";
  }
`;

const PanelScroll = styled.div`
  position: absolute;
  top: 0;
  right: 0;
  width: 4px;
  height: 217px;
  border-radius: 2px;
  background: #c9c9cb;
`;

const Status = styled.footer`
  display: flex;
  flex: none;
  align-items: center;
  height: 30px;
  padding: 0 11px 0 0;
  border-top: 1px solid #dcdcdc;
`;

const PageBox = styled.div`
  padding: 0 1px 0 4px;

  select {
    border: 0;
    background: #f1f1f4;
  }

  svg {
    right: 8px;
  }
`;

const PageLink = styled.a`
  padding: 0 19px 0 21px;
  color: #1fa97d;
  font-weight: 700;
`;

const StatusIcons = styled.div`
  display: flex;
  margin-left: 10px;
`;

const Slider = styled.input`
  width: 100px;
  height: 14px;
  appearance: none;

  &::-webkit-slider-runnable-track {
    height: 2px;
    background: linear-gradient(90deg, #000 var(--fill), #d4d4d4 var(--fill));
  }

  &::-webkit-slider-thumb {
    width: 12px;
    height: 12px;
    margin-top: -5px;
    border: 2px solid #000;
    border-radius: 50%;
    background: #fff;
    appearance: none;
  }
`;

const ZoomButton = styled.button`
  display: flex;
  align-items: center;
  gap: 3px;
  padding: 0 4px;
`;
